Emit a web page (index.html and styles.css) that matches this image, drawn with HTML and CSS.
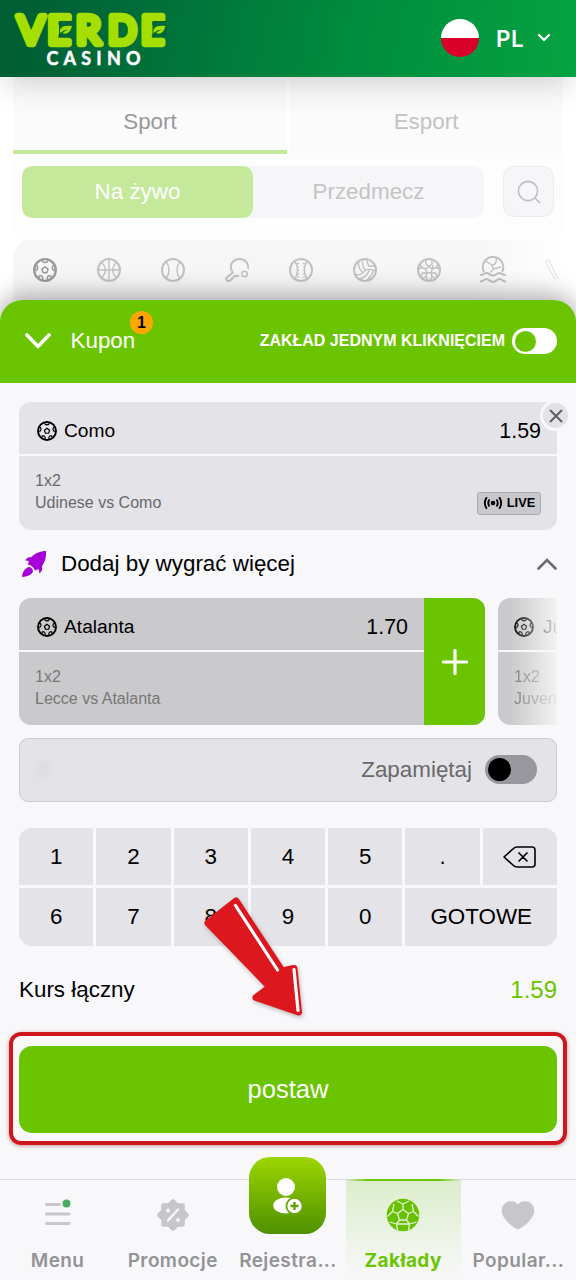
FILE: index.html
```html
<!DOCTYPE html>
<html lang="pl">
<head>
<meta charset="utf-8">
<title>Verde Casino</title>
<link rel="stylesheet" href="styles.css">
</head>
<body>
<svg class="defs" width="0" height="0">
  <symbol id="soccer" viewBox="0 0 24 24">
    <g fill="none" stroke="currentColor" stroke-linejoin="round">
      <circle cx="12" cy="12" r="10.8" stroke-width="2.3"/>
      <path stroke-width="1.4" d="M12 8.8l3.100 2.300-1.200 3.600h-3.800L8.900 11.100zM9 2.400L9.900 4 12 4.700l2.100-.7.900-1.600M21.800 7.300l-2 .7-.7 2.200 1.200 2 2.200.3M18.300 20.200l-.5-2.300-2.200-.2-1.400 1.800.3 2.900M9.500 22.400l.3-2.900-1.400-1.800-2.200.2-.5 2.300M1.500 12.500l2.200-.3 1.200-2-.7-2.200-2-.7"/>
    </g>
  </symbol>
</svg>
<div class="screen">
  <header class="top">
    <svg class="logo" width="170" height="64" viewBox="0 0 170 64">
      <g class="logo-main">
        <text x="6.500" y="35.500" textLength="27" lengthAdjust="spacingAndGlyphs">V</text>
        <text x="36.500" y="35.500">E</text>
        <text x="65" y="35.500">R</text>
        <text x="97" y="35.500" textLength="28.500" lengthAdjust="spacingAndGlyphs">D</text>
        <text x="130" y="35.500">E</text>
      </g>
      <g class="leaf-gap"><rect x="48" y="13" width="14" height="15.500"/><rect x="141.500" y="13" width="14" height="15.500"/></g>
      <g class="leaf">
        <path d="M49.500 25c-2-4.500 2-8.500 11.500-7-1.500 6.500-5.500 9-9.500 7 2-1.500 3.500-2.500 5.500-3.500-3 .3-5.500 1.500-7.500 3.500z"/>
        <path d="M143 25c-2-4.500 2-8.500 11.500-7-1.500 6.500-5.500 9-9.500 7 2-1.500 3.500-2.500 5.500-3.500-3 .3-5.500 1.500-7.500 3.500z"/>
      </g>
      <text class="logo-sub" x="35.500" y="56.500" textLength="94">CASINO</text>
    </svg>
    <div class="lang">
      <span class="flag"></span>
      <span class="code">PL</span>
      <svg width="14" height="10" viewBox="0 0 14 10"><path d="M2 2l5 5 5-5" class="line-w"/></svg>
    </div>
  </header>

  <main class="sports">
    <nav class="tabs"><a class="tab on">Sport</a><a class="tab">Esport</a></nav>
    <div class="filters">
      <div class="seg"><span class="seg-on">Na żywo</span><span class="seg-off">Przedmecz</span></div>
      <button class="search"><svg width="24" height="24" viewBox="0 0 24 24"><circle cx="11" cy="11" r="9.600"/><path d="M18 18l5 5"/></svg></button>
    </div>
    <div class="strip">
      <svg class="dark"><use href="#soccer"/></svg>
      <svg viewBox="0 0 24 24"><circle cx="12" cy="12" r="11"/><path d="M12 1v22M1 12h22M4.500 4.500c5 4 5 11 0 15M19.500 4.500c-5 4-5 11 0 15"/></svg>
      <svg viewBox="0 0 24 24"><circle cx="12" cy="12" r="11"/><path d="M5 3.500c4 5 4 12 0 17M19 3.500c-4 5-4 12 0 17"/></svg>
      <svg viewBox="0 0 24 24"><path class="thick" d="M6.500 12.500C4 5 9.500 1 14.500 1c5.500 0 9.500 4.500 8.500 10M6.800 12l1 2.500-6 5c-1.500 1.500.5 4.500 3 3.300l5.200-5 4 .2"/><circle class="thin" cx="19.500" cy="16" r="2.800"/></svg>
      <svg viewBox="0 0 24 24"><circle cx="12" cy="12" r="11"/><path d="M6 3.500c3.500 5 3.500 12 0 17M18 3.500c-3.500 5-3.500 12 0 17"/><path d="M9 5v15M15 5v15" stroke-width="2.400" stroke-dasharray="1.200 2.200"/></svg>
      <svg viewBox="0 0 24 24"><circle cx="12" cy="12" r="11"/><path d="M9.500 1.500C9 7 9.500 9.500 12.500 12c3.500-1 7-1 10.500 1M5.500 3.500c-.5 5.500 1.500 9 5 11.500M12.500 12c-2.500 4-6 5.500-10.500 4.500M14 1.500c0 3 .5 5 2 6.500 2 .5 4 .3 6-.5M16.500 12c-2 5-5.500 8-10.500 9M20.500 13c-1 3-3 6-6.500 9"/></svg>
      <svg viewBox="0 0 24 24"><circle cx="12" cy="12" r="11"/><path d="M12 8.500l3.300 2.400-1.200 3.900H9.900l-1.200-3.900zM12 8.500L9 6V2M12 8.500L15 6V2M15.300 10.900l.7-3.900M15.300 10.900l3.700-1.400 3.500 1.500M14.100 14.800l4.400.2 1.500 4M14.100 14.800L15 18.500 13 22.500M9.900 14.800L9 18.500l2 4M9.900 14.800l-4.400.2L4 19M8.700 10.900L5 9.500 1.500 11M19 9.500l2-3M5 9.500l-2-3M9 18.500l-3.500 2M15 18.500l3.500 2"/></svg>
      <svg class="polo" viewBox="0 0 28 28"><path class="thick" d="M5 16A10.200 10.200 0 1 1 23 16M1 19c4 0 4-2 6.500-2s3.500 2.500 6.500 2.500 4-2.500 6.500-2.500 2.500 2 6.500 2M1 25.500c4 0 4-2.500 6.500-2.500s3.500 3 6.500 3 4-3 6.500-3 2.500 2.500 6.500 2.500"/><path d="M6.500 5l6.500 4 1.500 4 7.500-2M14.500 13l-3 3.500M13 9c3 0 4.500-2.500 4.500-6.500"/></svg>
      <svg class="faint" viewBox="0 0 24 24"><path d="M1 3c1-1.500 3.500-1 4 1l8 17M1 3c-.5 3 4 9 9 18"/></svg>
    </div>
  </main>

  <section class="sheet">
    <div class="coupon-head">
      <svg width="26" height="16" viewBox="0 0 26 16"><path d="M2 2l11 11.500L24 2" class="line-w bold"/></svg>
      <span class="kupon">Kupon<b class="badge">1</b></span>
      <span class="oneclick">ZAKŁAD JEDNYM KLIKNIĘCIEM</span>
      <span class="switch"><i></i></span>
    </div>

    <div class="body">
      <article class="bet">
        <div class="bet-top"><svg class="ball"><use href="#soccer"/></svg><span class="team">Como</span><span class="odd">1.59</span></div>
        <div class="bet-info"><div>1x2<br>Udinese vs Como</div>
          <span class="live"><svg width="20" height="14" viewBox="0 0 20 14"><circle cx="10" cy="7" r="2.300" fill="#000"/><path d="M6.500 3.500q-2.500 3.500 0 7M13.500 3.500q2.500 3.500 0 7M3.800 1.200q-4 5.800 0 11.600M16.200 1.200q4 5.800 0 11.600" fill="none" stroke="#000" stroke-width="1.900"/></svg>LIVE</span>
        </div>
        <button class="close"><svg width="14" height="14" viewBox="0 0 14 14"><path d="M1 1l12 12M13 1L1 13"/></svg></button>
      </article>

      <div class="boost">
        <svg width="26" height="28" viewBox="0 0 26 28"><g fill="#a800d8"><path d="M24 1C18 1 13 3.500 9.500 7c-3 0-5 1-6.500 3.500 2 0 3 .3 4 1L5.800 14.500c4 .8 6 3 7.200 6l3.500-1.500c.7 1.500.8 3 .8 4.500 2.500-2 3.500-4.500 2.700-7.500C23 12 24.500 7 24 1z"/><path d="M6.500 17c2.500 0 4.500 2 4.500 4.500C9.500 25 5 26.500 0 27c0-4 2.500-8.500 6.500-10z"/></g></svg>
        <span>Dodaj by wygrać więcej</span>
        <svg width="20" height="12" viewBox="0 0 20 12"><path d="M1.500 10.500L10 2l8.500 8.500" class="line-g"/></svg>
      </div>

      <div class="carousel">
        <article class="offer">
          <div class="offer-main">
            <div class="bet-top"><svg class="ball"><use href="#soccer"/></svg><span class="team">Atalanta</span><span class="odd">1.70</span></div>
            <div class="bet-info"><div>1x2<br>Lecce vs Atalanta</div></div>
          </div>
          <button class="plus"><svg width="26" height="26" viewBox="0 0 26 26"><path d="M13 1.500v23M1.500 13h23" class="line-w mid"/></svg></button>
        </article>
        <article class="offer next">
          <div class="offer-main">
            <div class="bet-top"><svg class="ball"><use href="#soccer"/></svg><span class="team">Ju</span></div>
            <div class="bet-info"><div>1x2<br>Juven</div></div>
          </div>
        </article>
      </div>

      <div class="stake"><i class="smudge"></i><span>Zapamiętaj</span><span class="switch dim"><i></i></span></div>

      <div class="keys">
        <b>1</b><b>2</b><b>3</b><b>4</b><b>5</b><b>.</b>
        <b><svg width="33" height="22" viewBox="0 0 33 22"><path d="M1 11L10.500 2.500Q12 1 14 1H29q3 0 3 3V18q0 3-3 3H14q-2 0-3.500-1.500zM15.500 6.500l9 9M24.500 6.500l-9 9" fill="none" stroke="#000" stroke-width="1.600" stroke-linejoin="round"/></svg></b>
        <b>6</b><b>7</b><b>8</b><b>9</b><b>0</b><b class="wide">GOTOWE</b>
      </div>

      <div class="total"><span>Kurs łączny</span><span class="sum">1.59</span></div>
      <div class="submit-frame"><button class="submit">postaw</button></div>
    </div>
  </section>

  <nav class="bottom">
    <a class="item"><svg class="burger" width="26" height="30" viewBox="0 0 26 30"><path d="M1.500 7.500h13M1.500 17h22.500M1.500 26.500h22.500" stroke="#c7c7cb" stroke-width="3" stroke-linecap="round"/><circle cx="21.500" cy="6.500" r="4" fill="#48ad62"/></svg><span>Menu</span></a>
    <a class="item"><svg width="34" height="34" viewBox="-17 -17 34 34"><g fill="#c7c7cb" stroke="#c7c7cb" stroke-width="4" stroke-linejoin="round"><rect x="-9.800" y="-9.800" width="19.600" height="19.600"/><rect x="-9.800" y="-9.800" width="19.600" height="19.600" transform="rotate(45)"/></g><path d="M-5 5.500L5-5.500" stroke="#f8f8fa" stroke-width="2.300" stroke-linecap="round"/><circle cx="-5" cy="-4.500" r="1.900" fill="#f8f8fa"/><circle cx="5" cy="5" r="1.900" fill="#f8f8fa"/></svg><span>Promocje</span></a>
    <a class="item"><i class="reg"><svg width="36" height="40" viewBox="0 0 36 40"><circle cx="16" cy="11" r="9" fill="#fff"/><ellipse cx="16" cy="29.500" rx="12.700" ry="8" fill="#fff"/><circle cx="24.500" cy="30" r="9" fill="#67a900"/><circle cx="24.500" cy="30" r="7.200" fill="#fff"/><path d="M24.500 26v8M20.500 30h8" stroke="#62a300" stroke-width="2.300"/></svg></i><span>Rejestra...</span></a>
    <a class="item active"><svg width="34" height="34" viewBox="0 0 34 34"><circle cx="17" cy="17" r="16.300" fill="#67c100"/><path d="M17 11.500l5.500 4-2 6.500h-7l-2-6.500zM17 11.500V6M22.500 15.500l5-2M20.500 22l3 4M13.500 22l-3 4M11.500 15.500l-5-2M17 6l-6-3M17 6l6-3M27.500 13.500L26 6M27.500 13.500l5 5M23.500 26l7-2M23.500 26l-1 6M10.500 26l-7-2M10.500 26l1 6M6.500 13.500l-5 5M6.500 13.500L8 6M23.500 26h-13" fill="none" stroke="#e5f1da" stroke-width="1.300"/></svg><span>Zakłady</span></a>
    <a class="item"><svg class="heart" width="34" height="30" viewBox="0 0 34 30"><path d="M17 29.500C14 28.500.8 20 .8 10.500.8 1 12-1.500 17 4.500 22-1.500 33.200 1 33.200 10.500 33.200 20 20 28.500 17 29.500z" fill="#c7c7cb"/></svg><span>Popular...</span></a>
  </nav>

  <svg class="arrow" width="110" height="134" viewBox="0 0 110 134">
    <path d="M8 30L36 8 82 78 94 75.500 98.500 119 56 104.500 70 94z" fill="#dc171e" stroke="#dc171e" stroke-width="7" stroke-linejoin="round"/>
    <path d="M35.500 12.500L77.500 77M94 76.500L98 117.500" stroke="#fff" stroke-width="3.200" stroke-linecap="round"/>
  </svg>
</div>
</body>
</html>
```
FILE: styles.css
```css
* { box-sizing: border-box; }
body { margin: 0; font-family: "Liberation Sans", Arial, sans-serif; font-size: 22.4px; }
button { border: 0; padding: 0; font: inherit; }
svg { display: block; flex: none; }
.defs { position: absolute; }
.screen { position: relative; width: 576px; height: 1280px; overflow: hidden; display: flex; flex-direction: column; background: #fff; }

.top { height: 77px; flex: none; display: flex; justify-content: space-between; padding: 8px 25px 0 11px; background: linear-gradient(100deg, #005f35 5%, #008b3e 60%, #05a341 100%); box-shadow: 0 8px 34px -4px rgba(0,0,0,.2); position: relative; z-index: 1; }
.logo { overflow: visible; }
.logo-main { fill: #a4df00; stroke: #a4df00; stroke-width: 6.5px; stroke-linejoin: round; font: 400 39.5px Lato, sans-serif; }
.leaf-gap { fill: #006636; }
.leaf { fill: #a4df00; }
.logo-sub { fill: #fff; font: 700 18px Lato, sans-serif; stroke: #fff; stroke-width: .5px; }
.lang { display: flex; align-items: center; height: 60px; color: #fff; }
.flag { width: 38px; height: 38px; border-radius: 50%; background: linear-gradient(#fff 50%, #d90029 50%); margin-right: 17px; }
.code { font: 600 22.400px Inter, sans-serif; letter-spacing: .6px; width: 41px; }
.line-w { fill: none; stroke: #fff; stroke-width: 2.4; stroke-linecap: round; stroke-linejoin: round; }
.line-w.bold { stroke-width: 3.6; }
.line-w.mid { stroke-width: 3.2; }
.line-g { fill: none; stroke: #6a6a6c; stroke-width: 2.6; stroke-linecap: round; }

.sports { height: 223px; flex: none; padding: 0 13px; background: #fff; }
.tabs { display: flex; gap: 2px; height: 77px; }
.tab { flex: 1; display: flex; align-items: center; justify-content: center; padding-top: 16px; background: #fbfbfb; color: #c2c2c4; border-bottom: 4px solid transparent; }
.tab.on { color: #999; border-bottom-color: #c5e99b; }
.filters { display: flex; justify-content: space-between; padding: 12px 9px 0; height: 80px; background: #fdfdfd; }
.seg { display: flex; width: 462px; height: 52px; border-radius: 11px; background: #f6f6f8; }
.seg span { display: flex; align-items: center; justify-content: center; flex: 1; color: #c4c4c6; }
.seg .seg-on { background: #c5e99b; color: #fff; border-radius: 10px; }
.search { width: 51px; height: 51px; border: 1px solid #ececef; border-radius: 11px; background: #f6f6f8; display: flex; align-items: center; justify-content: center; }
.search svg { fill: none; stroke: #bebec0; stroke-width: 1.6; }
.strip { margin-top: 6px; height: 60px; display: flex; align-items: center; gap: 40px; padding-left: 20px; border-radius: 18px 18px 0 0; background: linear-gradient(90deg, #f6f6f7 84%, #fff); overflow: hidden; }
.strip svg { width: 24px; height: 24px; fill: none; stroke: #c1c1c3; stroke-width: 1.4; color: #999; }
.strip circle:first-child { stroke-width: 2; }
.strip .thick { stroke-width: 2; }
.strip .polo { width: 28px; height: 28px; margin: 0 -2px; }
.strip .faint { stroke: #e6e6e8; }

.sheet { height: 879px; flex: none; position: relative; border-radius: 22px 22px 0 0; background: #f8f8fa; box-shadow: 0 -4px 26px rgba(0,0,0,.34); z-index: 2; }
.coupon-head { height: 82.500px; border-radius: 22px 22px 0 0; background: #6ac400; display: flex; align-items: center; padding: 0 19px 0 25px; color: #fff; }
.kupon { position: relative; margin-left: 19.500px; }
.badge { position: absolute; left: 59.500px; top: -17px; width: 23px; height: 23px; border-radius: 50%; background: #ffa600; color: #000; font-size: 16px; line-height: 23px; text-align: center; }
.oneclick { margin-left: auto; font-size: 16px; font-weight: 700; }
.switch { width: 45px; height: 26px; border-radius: 13px; background: #fff; margin-left: 7px; padding: 2.500px; }
.switch i { display: block; width: 21px; height: 21px; border-radius: 50%; background: #6ac400; }

.body { padding: 19.500px 19px 0; }
.bet { position: relative; height: 128px; border-radius: 12px; background: #e4e3e8; }
.bet-top { height: 54px; display: flex; align-items: center; padding: 6px 16px 0 18px; border-bottom: 2px solid #f8f8fa; }
.ball { width: 20px; height: 20px; }
.team { font-size: 19.200px; margin-left: 7px; }
.odd { margin-left: auto; font-size: 21.400px; }
.bet-info { display: flex; justify-content: space-between; padding: 14px 16px; font-size: 16px; line-height: 22.400px; color: #69696b; }
.live { align-self: flex-end; display: flex; align-items: center; justify-content: center; gap: 4px; width: 64px; height: 23px; border: 1px solid #aaaab0; border-radius: 3px; background: #c9c9cd; color: #000; font-size: 12.800px; font-weight: 700; margin-top: 20px; }
.close { position: absolute; right: -14px; top: -2px; width: 31px; height: 31px; border: 3px solid #f8f8fa; border-radius: 50%; background: #e2e2e5; display: flex; align-items: center; justify-content: center; }
.close path { stroke: #5e5e60; stroke-width: 1.900; }
.boost { height: 68px; display: flex; align-items: center; padding-left: 3px; }
.boost span { margin: 0 auto 0 13px; }
.carousel { display: flex; gap: 13px; height: 127px; overflow: hidden; }
.offer { display: flex; flex: none; width: 466px; border-radius: 12px; overflow: hidden; background: #cacacc; }
.offer-main { flex: 1; }
.offer .bet-info { color: #777; }
.plus { width: 61px; background: #6ac400; display: flex; align-items: center; justify-content: center; }
.next { width: 59px; border-radius: 12px 0 0 12px; -webkit-mask-image: linear-gradient(90deg, #000 12px, transparent 66px); mask-image: linear-gradient(90deg, #000 12px, transparent 66px); }
.next .bet-top { padding-right: 0; }
.next .bet-info { padding-right: 0; }
.next .ball { margin-left: -2px; }
.next .team { margin-left: 9px; }
.stake { margin-top: 12.500px; height: 64px; border: 1.500px solid #cdccd5; border-radius: 9px; background: #e4e3e8; display: flex; align-items: center; padding: 0 19px 0 17px; color: #69696b; }
.smudge { width: 12px; height: 16px; background: #dcdbe0; filter: blur(3px); }
.stake span:first-of-type { margin-left: auto; }
.switch.dim { width: 52px; height: 29px; border-radius: 15px; background: #97979d; margin-left: 13px; padding: 3px; }
.dim i { width: 23px; height: 23px; background: #000; }
.keys { margin-top: 26px; height: 118px; display: grid; grid-template-columns: repeat(7, 1fr); grid-template-rows: 1fr 1fr; gap: 3px; border-radius: 13px; overflow: hidden; }
.keys b { font-weight: 400; background: #e4e3e8; display: flex; align-items: center; justify-content: center; padding-top: 1px; }
.keys .wide { grid-column: span 2; }
.total { display: flex; justify-content: space-between; align-items: center; height: 86px; padding-top: 2px; }
.sum { color: #6ac400; font-size: 24px; }
.submit-frame { margin: 0 -10px; padding: 10px 6px 8px; border: 4px solid #d0161d; border-radius: 12px; height: 113px; box-shadow: 0 1px 4px rgba(120,0,0,.4); }
.submit { display: block; width: 100%; height: 87px; border-radius: 13px; background: #6ac400; color: #fff; font-size: 25.600px; }

.bottom { height: 101px; flex: none; display: flex; border-top: 1px solid #dddde0; background: #f8f8fa; position: relative; z-index: 3; }
.item { width: 115.200px; display: flex; flex-direction: column; align-items: center; color: #939397; font: 600 19px Inter, sans-serif; letter-spacing: .4px; position: relative; }
.item > svg { margin: 18px 0 auto; }
.item > .burger { margin-top: 17px; }
.item > .heart { margin-top: 20px; }
.item span { line-height: 24px; margin-bottom: 7px; }
.reg { display: flex; align-items: center; justify-content: center; width: 77px; height: 77px; border-radius: 21px; background: linear-gradient(#9cd600, #4f9000); margin: -23px 0 auto; }
.active { color: #6ac400; font-weight: 700; background: linear-gradient(#dcedcb, #f8f8fa); }
.active::before { content: ""; position: absolute; left: 0; right: 0; top: -1px; height: 2px; background: linear-gradient(90deg, transparent, #6ac400 20%, #6ac400 80%, transparent); }

.arrow { position: absolute; left: 200px; top: 893px; z-index: 4; filter: drop-shadow(1px 2px 2px rgba(0,0,0,.25)); }
```
